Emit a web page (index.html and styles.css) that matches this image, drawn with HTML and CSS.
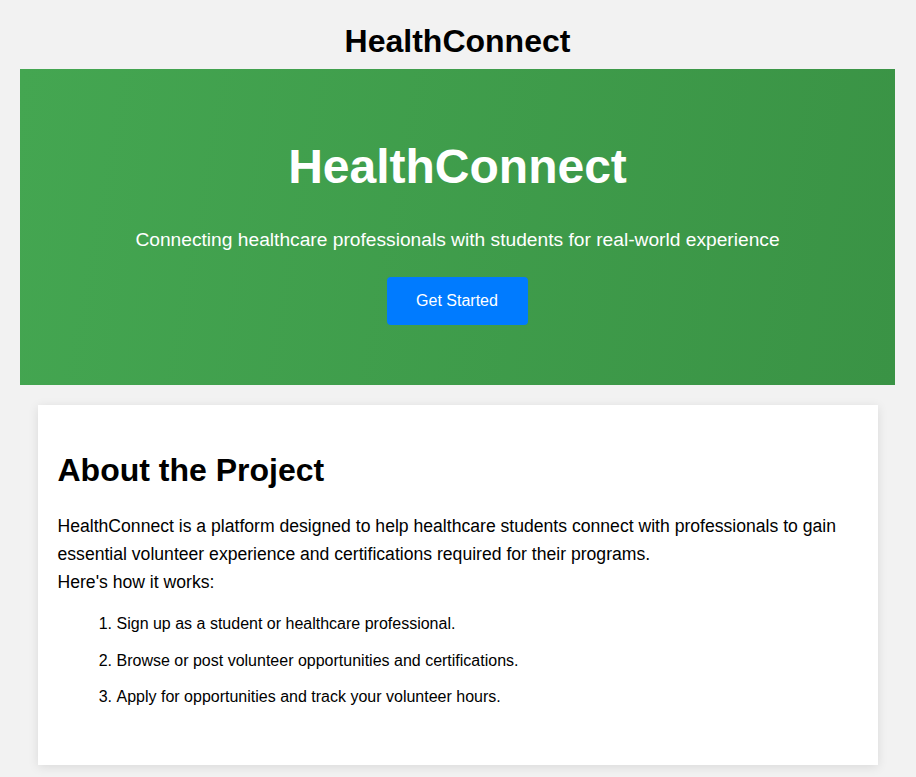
FILE: index.html
```html
<!DOCTYPE html>
<html lang="en">
<head>
<meta charset="utf-8">
<title>HealthConnect</title>
<link rel="stylesheet" href="styles.css">
</head>
<body>
  <header class="site-header">
    <h1 class="site-title">HealthConnect</h1>
  </header>
  <section class="hero">
    <h1 class="hero-title">HealthConnect</h1>
    <p class="hero-subtitle">Connecting healthcare professionals with students for real-world experience</p>
    <a class="hero-button" href="#">Get Started</a>
  </section>
  <main class="container">
    <h2 class="about-title">About the Project</h2>
    <p class="about-text">HealthConnect is a platform designed to help healthcare students connect with professionals to gain essential volunteer experience and certifications required for their programs.<br>Here's how it works:</p>
    <ol class="steps">
      <li>Sign up as a student or healthcare professional.</li>
      <li>Browse or post volunteer opportunities and certifications.</li>
      <li>Apply for opportunities and track your volunteer hours.</li>
    </ol>
  </main>
</body>
</html>
```
FILE: styles.css
```css
html, body {
  margin: 0;
}
body {
  padding: 0 21px 20px 20px;
  background: #f2f2f2;
  color: #000;
  font-family: "Liberation Sans", Arial, sans-serif;
  line-height: 1.6;
}
.site-header {
  text-align: center;
}
.site-title {
  margin: 0;
  padding: 23px 0 9px;
  font-size: 32px;
  line-height: normal;
  font-weight: bold;
}
.hero {
  background: linear-gradient(100deg, #44a651 0%, #3a9345 100%);
  color: #fff;
  text-align: center;
  padding: 38px 20px 60px;
}
.hero-title {
  margin: 32px 0 0;
  font-size: 48px;
  line-height: normal;
  font-weight: bold;
}
.hero-subtitle {
  margin: 35px 0 26px;
  font-size: 19.2px;
  line-height: normal;
}
.hero-button {
  display: inline-block;
  background: #007bff;
  color: #fff;
  text-decoration: none;
  font-size: 16px;
  line-height: 18px;
  padding: 15px 30px 15px 29px;
  border-radius: 4px;
}
.container {
  max-width: 800px;
  margin: 20px auto 0;
  padding: 20px 20px 56px;
  background: #fff;
  box-shadow: 0 2px 10px rgba(0, 0, 0, 0.1);
}
.about-title {
  margin: 27px 0 23px;
  font-size: 32px;
  line-height: normal;
}
.about-text {
  margin: 0;
  font-size: 17.6px;
}
.steps {
  margin: 15px 0 0;
  padding: 0 0 0 59px;
  font-size: 16px;
}
.steps li {
  margin-bottom: 10.5px;
}
.steps li:last-child {
  margin-bottom: 0;
}
```
